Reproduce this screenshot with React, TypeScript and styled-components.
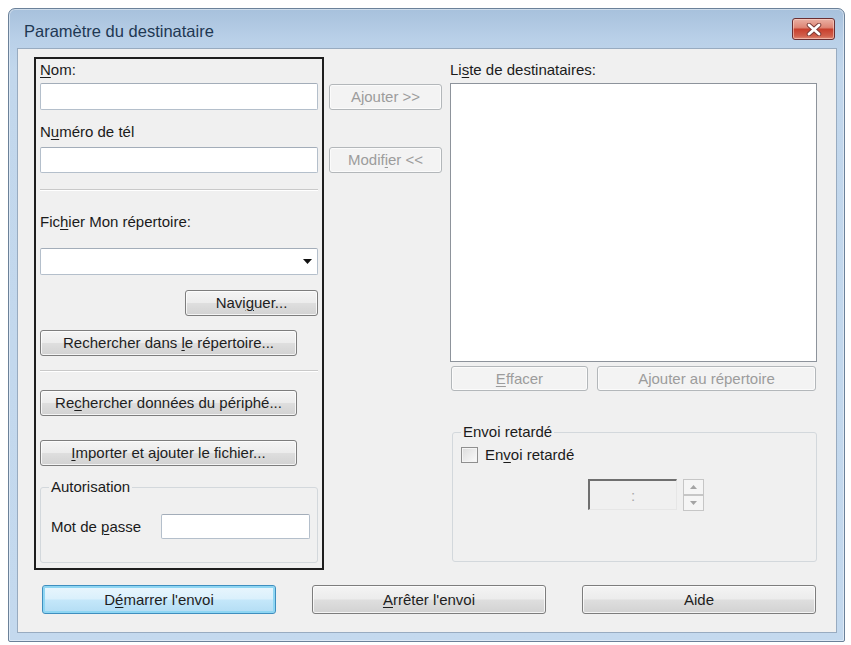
import styled, { createGlobalStyle, css } from 'styled-components'

const GlobalStyle = createGlobalStyle`
  html, body {
    margin: 0;
    padding: 0;
    background: #ffffff;
  }
  body {
    font-family: 'Liberation Sans', Arial, sans-serif;
    font-size: 15px;
    color: #1b1b1b;
  }
`;

type Spaced = { $mt?: number };
const spaced = css<Spaced>`
  margin-top: ${(p) => p.$mt ?? 0}px;
`;

const Page = styled.div`
  width: 851px;
  height: 645px;
  box-sizing: border-box;
  padding: 8px 0 0 8px;
`;

const Window = styled.div`
  width: 837px;
  height: 634px;
  box-sizing: border-box;
  display: flex;
  flex-direction: column;
  border: 1px solid #6b8199;
  border-radius: 7px 7px 2px 2px;
  background: linear-gradient(#a7c1dc 0px, #b9d0e8 30px, #c2d7ec 60px, #c4d9ee 100%);
  box-shadow: inset 0 0 0 1px rgba(255, 255, 255, 0.45);
`;

const TitleBar = styled.div`
  height: 39px;
  flex: none;
  display: flex;
  align-items: center;
  justify-content: space-between;
  padding: 0 9px 0 15px;
`;

const Title = styled.div`
  font-size: 16.5px;
  color: #1f3853;
  margin-top: 6px;
`;

const CloseButton = styled.div`
  width: 43px;
  height: 22px;
  box-sizing: border-box;
  margin-top: 1px;
  display: flex;
  align-items: center;
  justify-content: center;
  border: 1px solid #6a2f33;
  border-radius: 3px;
  background: linear-gradient(#eab0a4 0%, #de8676 42%, #c8402e 52%, #d1604c 85%, #e08a77 100%);
  box-shadow: inset 0 0 0 1px rgba(255, 220, 210, 0.55);
`;

const Body = styled.div`
  flex: 1;
  margin: 0 7px 8px 8px;
  box-sizing: border-box;
  border: 1px solid #98abc0;
  background: #f0f0f0;
  padding: 8px 0 0 16px;
  display: flex;
  flex-direction: column;
`;

const MainRow = styled.div`
  display: flex;
  align-items: flex-start;
`;

const SourceBox = styled.div`
  width: 290px;
  box-sizing: border-box;
  border: 2px solid #1e1e1e;
  padding: 0 4px 5px 4px;
  display: flex;
  flex-direction: column;
`;

const MiddleColumn = styled.div`
  width: 113px;
  margin: 0 8px 0 5px;
  display: flex;
  flex-direction: column;
`;

const RightColumn = styled.div`
  width: 367px;
  display: flex;
  flex-direction: column;
`;

const Label = styled.div<Spaced>`
  ${spaced};
  height: 18px;
  line-height: 18px;
  white-space: nowrap;
`;

const Key = styled.span`
  text-decoration: underline;
  text-underline-offset: 2px;
  text-decoration-thickness: 1px;
`;

const TextBox = styled.div<Spaced & { $h?: number; $w?: number }>`
  ${spaced};
  height: ${(p) => p.$h ?? 26}px;
  width: ${(p) => (p.$w ? `${p.$w}px` : 'auto')};
  box-sizing: border-box;
  background: #ffffff;
  border: 1px solid #b4bfcb;
  border-top-color: #a3adb9;
  border-radius: 2px;
`;

const Combo = styled(TextBox)`
  display: flex;
  align-items: center;
  justify-content: flex-end;
  padding-right: 5px;
`;

const Separator = styled.div<Spaced>`
  ${spaced};
  border-top: 1px solid #c9c9c9;
  border-bottom: 1px solid #ffffff;
`;

const Button = styled.div<Spaced & { $w?: number; $h?: number; $disabled?: boolean; $default?: boolean }>`
  ${spaced};
  width: ${(p) => (p.$w ? `${p.$w}px` : 'auto')};
  height: ${(p) => p.$h ?? 26}px;
  line-height: ${(p) => (p.$h ?? 26) - 2}px;
  box-sizing: border-box;
  text-align: center;
  white-space: nowrap;
  border-radius: 3px;
  border: 1px solid #7d7d7d;
  background: linear-gradient(#f4f4f4 0%, #ececec 48%, #dedede 52%, #d2d2d2 100%);
  box-shadow: inset 0 0 0 1px rgba(255, 255, 255, 0.75);
  color: #1e1e1e;
  ${(p) =>
    p.$disabled &&
    css`
      border-color: #b3b7ba;
      background: #f3f3f3;
      color: #9c9c9c;
      box-shadow: inset 0 0 0 1px #fbfbfb;
    `}
  ${(p) =>
    p.$default &&
    css`
      border-color: #3f8fbf;
      background: linear-gradient(#e9f6fd 0%, #daf0fc 48%, #c4e7fa 52%, #b3ddf4 100%);
      box-shadow: inset 0 0 0 2px #8fd6f3;
    `}
`;

const AlignRight = styled.div<Spaced>`
  ${spaced};
  display: flex;
  justify-content: flex-end;
`;

const Group = styled.fieldset<Spaced & { $ml?: number; $pad: string }>`
  ${spaced};
  margin-left: ${(p) => p.$ml ?? 0}px;
  margin-right: 0;
  margin-bottom: 0;
  min-width: 0;
  padding: ${(p) => p.$pad};
  border: 1px solid #d3d8dc;
  border-radius: 3px;
`;

const Legend = styled.legend`
  padding: 0 2px;
  height: 18px;
  line-height: 18px;
  white-space: nowrap;
`;

const FieldRow = styled.div`
  display: flex;
  align-items: center;
  justify-content: space-between;
  padding-left: 2px;
`;

const ListBox = styled.div<Spaced>`
  ${spaced};
  height: 279px;
  box-sizing: border-box;
  background: #ffffff;
  border: 1px solid #8d939b;
`;

const ButtonPair = styled.div<Spaced>`
  ${spaced};
  display: flex;
  gap: 9px;
  padding-left: 1px;
`;

const CheckRow = styled.label`
  display: flex;
  align-items: center;
  gap: 7px;
  height: 17px;
`;

const CheckBox = styled.span`
  width: 17px;
  height: 16px;
  box-sizing: border-box;
  border: 1px solid #8f8f8f;
  background: linear-gradient(135deg, #dcdcdc, #fbfbfb);
  box-shadow: inset 0 0 0 1px #f4f4f4;
`;

const TimeRow = styled.div<Spaced>`
  ${spaced};
  margin-left: 127px;
  display: flex;
  gap: 6px;
`;

const TimeField = styled.div`
  width: 89px;
  height: 31px;
  box-sizing: border-box;
  border-top: 2px solid #6f6f6f;
  border-left: 2px solid #6f6f6f;
  border-right: 1px solid #e6e6e6;
  border-bottom: 1px solid #e6e6e6;
  background: #f0f0f0;
  display: flex;
  align-items: center;
  justify-content: center;
  color: #a8a8a8;
`;

const Spinner = styled.div`
  width: 21px;
  height: 32px;
  display: flex;
  flex-direction: column;
`;

const SpinHalf = styled.div`
  flex: 1;
  box-sizing: border-box;
  border: 1px solid #c6c6c6;
  background: #f5f5f5;
  display: flex;
  align-items: center;
  justify-content: center;
`;

const BottomRow = styled.div`
  margin-top: 15px;
  margin-left: 8px;
  display: flex;
  gap: 36px;
`;

function Arrow({ up }: { up?: boolean }) {
  return (
    <svg width="7" height="4" viewBox="0 0 7 4">
      <path d={up ? 'M0 4 L3.5 0 L7 4 Z' : 'M0 0 L3.5 4 L7 0 Z'} fill="#a4a4a4" />
    </svg>
  );
}

function App() {
  return (
    <>
      <GlobalStyle />
      <Page>
        <Window>
          <TitleBar>
            <Title>Paramètre du destinataire</Title>
            <CloseButton>
              <svg width="16" height="13" viewBox="0 0 16 13">
                <path d="M3 2 L13 11 M13 2 L3 11" stroke="#7a3a36" strokeWidth="4.6" strokeLinecap="round" />
                <path d="M3 2 L13 11 M13 2 L3 11" stroke="#ffffff" strokeWidth="2.8" strokeLinecap="round" />
              </svg>
            </CloseButton>
          </TitleBar>
          <Body>
            <MainRow>
              <SourceBox>
                <Label $mt={2}>
                  <Key>N</Key>om:
                </Label>
                <TextBox $mt={4} $h={27} />
                <Label $mt={13}>
                  N<Key>u</Key>méro de tél
                </Label>
                <TextBox $mt={6} />
                <Separator $mt={16} />
                <Label $mt={22}>
                  Fic<Key>h</Key>ier Mon répertoire:
                </Label>
                <Combo $mt={17} $h={27}>
                  <svg width="9" height="5" viewBox="0 0 9 5">
                    <path d="M0 0 L9 0 L4.5 5 Z" fill="#111111" />
                  </svg>
                </Combo>
                <AlignRight $mt={15}>
                  <Button $w={133}>
                    Navi<Key>g</Key>uer...
                  </Button>
                </AlignRight>
                <Button $mt={14} $w={257}>
                  Rechercher dans <Key>l</Key>e répertoire...
                </Button>
                <Separator $mt={14} />
                <Button $mt={18} $w={257}>
                  Re<Key>c</Key>hercher données du périphé...
                </Button>
                <Button $mt={24} $w={257}>
                  <Key>I</Key>mporter et ajouter le fichier...
                </Button>
                <Group $mt={12} $pad="18px 7px 23px 8px">
                  <Legend>Autorisation</Legend>
                  <FieldRow>
                    <span>
                      Mot de <Key>p</Key>asse
                    </span>
                    <TextBox $h={25} $w={149} />
                  </FieldRow>
                </Group>
              </SourceBox>

              <MiddleColumn>
                <Button $mt={27} $disabled>
                  A<Key>j</Key>outer &gt;&gt;
                </Button>
                <Button $mt={37} $disabled>
                  Modif<Key>i</Key>er &lt;&lt;
                </Button>
              </MiddleColumn>

              <RightColumn>
                <Label $mt={4}>
                  Li<Key>s</Key>te de destinataires:
                </Label>
                <ListBox $mt={4} />
                <ButtonPair $mt={4}>
                  <Button $w={137} $h={25} $disabled>
                    <Key>E</Key>ffacer
                  </Button>
                  <Button $w={219} $h={25} $disabled>
                    Ajouter au répertoire
                  </Button>
                </ButtonPair>
                <Group $mt={32} $ml={2} $pad="5px 8px 50px 8px">
                  <Legend>Envoi retardé</Legend>
                  <CheckRow>
                    <CheckBox />
                    <span>
                      En<Key>v</Key>oi retardé
                    </span>
                  </CheckRow>
                  <TimeRow $mt={16}>
                    <TimeField>:</TimeField>
                    <Spinner>
                      <SpinHalf>
                        <Arrow up />
                      </SpinHalf>
                      <SpinHalf>
                        <Arrow />
                      </SpinHalf>
                    </Spinner>
                  </TimeRow>
                </Group>
              </RightColumn>
            </MainRow>

            <BottomRow>
              <Button $w={234} $h={29} $default>
                D<Key>é</Key>marrer l'envoi
              </Button>
              <Button $w={234} $h={29}>
                <Key>A</Key>rrêter l'envoi
              </Button>
              <Button $w={234} $h={29}>
                Aide
              </Button>
            </BottomRow>
          </Body>
        </Window>
      </Page>
    </>
  );
}

export default App
